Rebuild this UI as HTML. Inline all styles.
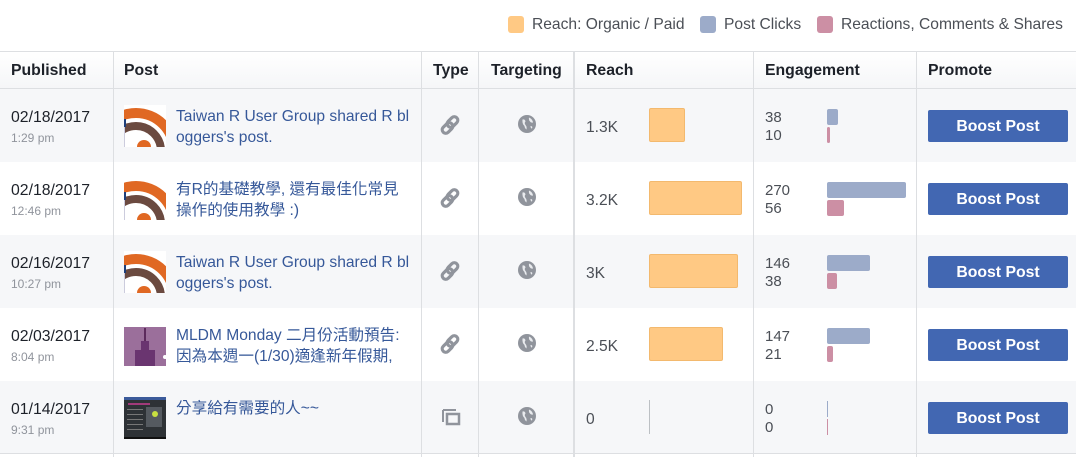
<!DOCTYPE html>
<html><head><meta charset="utf-8"><style>
*{margin:0;padding:0;box-sizing:border-box}
body{width:1076px;height:457px;background:#fff;font-family:"Liberation Sans","Noto Sans CJK TC",sans-serif;position:relative;overflow:hidden;color:#1d2129}
.a{position:absolute}
.lg{font-size:15.6px;color:#4b4f56;top:16px}
.sq{width:16px;height:17px;border-radius:3px;top:16px}
.hd{top:51px;left:0;width:1076px;height:38px;background:linear-gradient(#fff,#f5f6f8);border-top:1px solid #dddfe2;border-bottom:1px solid #dddfe2}
.th{top:62px;font-size:15.8px;font-weight:bold;color:#1d2129}
.vl{width:1px;background:#dddfe2;top:51px;height:406px}
.row{left:0;width:1076px;height:73px}
.date{font-size:15.8px;color:#1d2129}
.time{font-size:12px;color:#90949c}
.pt{font-size:15.6px;color:#365899;line-height:21px;width:250px;white-space:nowrap}
.num{font-size:15.6px;color:#4b4f56}
.en{font-size:15px;color:#4b4f56;line-height:18px}
.rb{background:#ffc984;border:1px solid #f3b96e;border-radius:2px;height:34px;left:649px}
.b1{background:#9cabc9;border-radius:2px;height:16px;left:827px}
.b2{background:#cc8fa4;border-radius:2px;height:16px;left:827px}
.btn{left:928px;width:140px;height:32px;background:#4267b2;border-radius:2px;color:#fff;font-weight:bold;font-size:15.8px;text-align:center;line-height:34px}
</style></head><body>
<div class="a sq" style="left:508px;background:#ffc984"></div><div class="a lg" style="left:532px">Reach: Organic / Paid</div>
<div class="a sq" style="left:700px;background:#9cabc9"></div><div class="a lg" style="left:724px">Post Clicks</div>
<div class="a sq" style="left:817px;background:#cc8fa4"></div><div class="a lg" style="left:841px">Reactions, Comments &amp; Shares</div>

<div class="a row" style="top:89px;background:#f6f7f9"></div>
<div class="a row" style="top:235px;background:#f6f7f9"></div>
<div class="a row" style="top:381px;background:#f6f7f9"></div>
<div class="a" style="top:453px;left:0;width:1076px;height:1px;background:#dddfe2"></div>

<div class="a hd"></div>
<div class="a th" style="left:11px">Published</div>
<div class="a th" style="left:124px">Post</div>
<div class="a th" style="left:433px">Type</div>
<div class="a th" style="left:491px">Targeting</div>
<div class="a th" style="left:586px">Reach</div>
<div class="a th" style="left:765px">Engagement</div>
<div class="a th" style="left:928px">Promote</div>
<div class="a vl" style="left:113px"></div>
<div class="a vl" style="left:421px"></div>
<div class="a vl" style="left:478px"></div>
<div class="a vl" style="left:573px;width:2px"></div>
<div class="a vl" style="left:753px"></div>
<div class="a vl" style="left:916px"></div>

<svg width="0" height="0" style="position:absolute"><defs>
<clipPath id="cp"><rect width="42" height="42"/></clipPath>
<g id="rss"><rect width="42" height="42" fill="#fff"/><g clip-path="url(#cp)" fill="none"><circle cx="12" cy="46" r="38" stroke="#e06823" stroke-width="10"/><circle cx="12" cy="46" r="25" stroke="#6b4a40" stroke-width="8"/></g><circle cx="20" cy="42" r="7" fill="#e06823"/><rect x="0" y="14" width="2" height="8" fill="#1f3f7a"/><rect x="0" y="22" width="1" height="20" fill="#ccd"/></g>
<g id="lnk" fill="none" stroke="#90949c" stroke-width="3.2"><rect x="4" y="8" width="7" height="12" rx="3.5" transform="rotate(45 7.5 14)"/><rect x="9" y="2" width="7" height="12" rx="3.5" transform="rotate(45 12.5 8)"/></g>
<g id="glb"><circle cx="9" cy="9" r="9" fill="#90949c"/><path d="M4.5 4.5 Q7 4 7.5 6.5 Q6 8 7.5 10 Q9 11.5 8.5 14.5 Q6.5 13 6.5 11 Q4 9 4.5 4.5Z M11 2.5 Q14.5 4 15 7.5 Q13 8 12 6.5 Q10.5 5 11 2.5Z M12.5 11 Q15 11 14 13.5 Q12.5 13.5 12.5 11Z" fill="#e9ebee"/></g>
</defs></svg>

<!-- row 1 -->
<div class="a date" style="left:11px;top:109px">02/18/2017</div><div class="a time" style="left:11px;top:131px">1:29 pm</div>
<svg class="a" style="left:124px;top:105px" width="42" height="42"><use href="#rss"/></svg>
<div class="a pt" style="left:176px;top:106px">Taiwan R User Group shared R bl<br>oggers's post.</div>
<svg class="a" style="left:440px;top:114px" width="20" height="22"><use href="#lnk"/></svg>
<svg class="a" style="left:518px;top:115px" width="18" height="18"><use href="#glb"/></svg>
<div class="a num" style="left:586px;top:119px">1.3K</div>
<div class="a rb" style="top:108px;width:36px"></div>
<div class="a en" style="left:765px;top:109px">38<br>10</div>
<div class="a b1" style="top:109px;width:11px"></div><div class="a b2" style="top:127px;width:3px"></div>
<div class="a btn" style="top:110px">Boost Post</div>

<!-- row 2 -->
<div class="a date" style="left:11px;top:182px">02/18/2017</div><div class="a time" style="left:11px;top:204px">12:46 pm</div>
<svg class="a" style="left:124px;top:178px" width="42" height="42"><use href="#rss"/></svg>
<div class="a pt" style="left:176px;top:179px">有R的基礎教學, 還有最佳化常見<br>操作的使用教學 :)</div>
<svg class="a" style="left:440px;top:187px" width="20" height="22"><use href="#lnk"/></svg>
<svg class="a" style="left:518px;top:188px" width="18" height="18"><use href="#glb"/></svg>
<div class="a num" style="left:586px;top:192px">3.2K</div>
<div class="a rb" style="top:181px;width:93px"></div>
<div class="a en" style="left:765px;top:182px">270<br>56</div>
<div class="a b1" style="top:182px;width:79px"></div><div class="a b2" style="top:200px;width:17px"></div>
<div class="a btn" style="top:183px">Boost Post</div>

<!-- row 3 -->
<div class="a date" style="left:11px;top:255px">02/16/2017</div><div class="a time" style="left:11px;top:277px">10:27 pm</div>
<svg class="a" style="left:124px;top:251px" width="42" height="42"><use href="#rss"/></svg>
<div class="a pt" style="left:176px;top:252px">Taiwan R User Group shared R bl<br>oggers's post.</div>
<svg class="a" style="left:440px;top:260px" width="20" height="22"><use href="#lnk"/></svg>
<svg class="a" style="left:518px;top:261px" width="18" height="18"><use href="#glb"/></svg>
<div class="a num" style="left:586px;top:265px">3K</div>
<div class="a rb" style="top:254px;width:89px"></div>
<div class="a en" style="left:765px;top:255px">146<br>38</div>
<div class="a b1" style="top:255px;width:43px"></div><div class="a b2" style="top:273px;width:10px"></div>
<div class="a btn" style="top:256px">Boost Post</div>

<!-- row 4 -->
<div class="a date" style="left:11px;top:328px">02/03/2017</div><div class="a time" style="left:11px;top:350px">8:04 pm</div>
<svg class="a" style="left:124px;top:324px" width="42" height="42"><rect width="42" height="42" fill="#9b6f9b"/><rect x="0" y="0" width="42" height="3" fill="#fff"/><rect x="20" y="4" width="2" height="14" fill="#5c2a5c"/><rect x="17" y="17" width="8" height="10" fill="#6a3570"/><rect x="11" y="26" width="20" height="16" fill="#6a3570"/><circle cx="41" cy="33" r="2" fill="#fff"/></svg>
<div class="a pt" style="left:176px;top:325px">MLDM Monday 二月份活動預告:<br>因為本週一(1/30)適逢新年假期,</div>
<svg class="a" style="left:440px;top:333px" width="20" height="22"><use href="#lnk"/></svg>
<svg class="a" style="left:518px;top:334px" width="18" height="18"><use href="#glb"/></svg>
<div class="a num" style="left:586px;top:338px">2.5K</div>
<div class="a rb" style="top:327px;width:74px"></div>
<div class="a en" style="left:765px;top:328px">147<br>21</div>
<div class="a b1" style="top:328px;width:43px"></div><div class="a b2" style="top:346px;width:6px"></div>
<div class="a btn" style="top:329px">Boost Post</div>

<!-- row 5 -->
<div class="a date" style="left:11px;top:401px">01/14/2017</div><div class="a time" style="left:11px;top:423px">9:31 pm</div>
<svg class="a" style="left:124px;top:397px" width="42" height="42"><rect width="42" height="42" fill="#2e3236"/><rect x="0" y="0" width="42" height="3" fill="#3b5a9a"/><rect x="4" y="6" width="22" height="2" fill="#a23a7a"/><rect x="3" y="12" width="16" height="1" fill="#777"/><rect x="3" y="17" width="16" height="1" fill="#777"/><rect x="3" y="22" width="16" height="1" fill="#777"/><rect x="3" y="27" width="16" height="1" fill="#777"/><rect x="3" y="32" width="16" height="1" fill="#777"/><rect x="22" y="10" width="16" height="20" fill="#555a60"/><circle cx="31" cy="17" r="3" fill="#c8e040"/><rect x="0" y="40" width="42" height="2" fill="#111"/></svg>
<div class="a pt" style="left:176px;top:398px">分享給有需要的人~~</div>
<svg class="a" style="left:441px;top:407px" width="20" height="20"><path d="M2 3 V15 M2 3 H15" stroke="#90949c" stroke-width="2" fill="none"/><rect x="6" y="7" width="12" height="10" fill="none" stroke="#90949c" stroke-width="2.5"/></svg>
<svg class="a" style="left:518px;top:407px" width="18" height="18"><use href="#glb"/></svg>
<div class="a num" style="left:586px;top:411px">0</div>
<div class="a" style="left:649px;top:400px;width:1px;height:34px;background:#bcc0c4"></div>
<div class="a en" style="left:765px;top:401px">0<br>0</div>
<div class="a" style="left:827px;top:401px;width:1px;height:16px;background:#9cabc9"></div><div class="a" style="left:827px;top:419px;width:1px;height:16px;background:#cc8fa4"></div>
<div class="a btn" style="top:402px">Boost Post</div>
</body></html>
